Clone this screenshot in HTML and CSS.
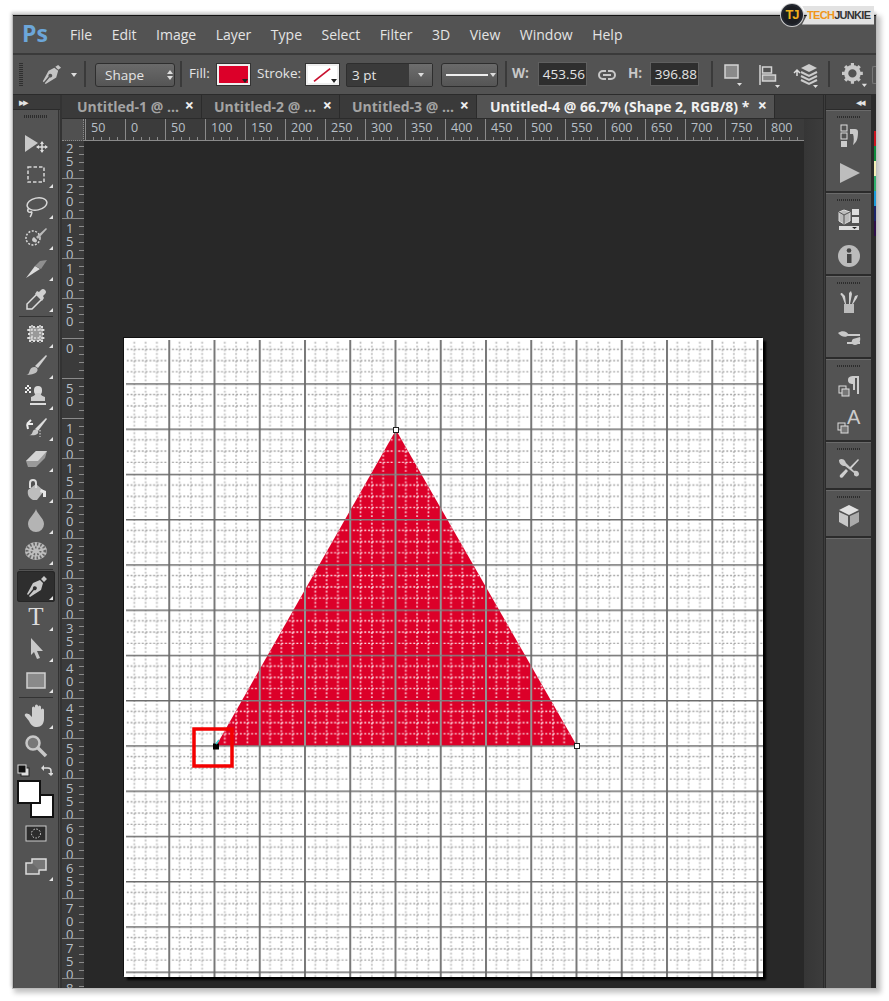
FILE: index.html
```html
<!DOCTYPE html>
<html lang="en">
<head>
    <meta charset="UTF-8">
    <title>Photoshop - Untitled-4</title>
    <link rel="stylesheet" href="styles.css">
</head>
<body>
    <div class="window">
        <div class="watermark">
            <span class="wm-circle">TJ</span>
            <span class="wm-tag"><b class="wm-orange">TECH</b><b>JUNKIE</b></span>
        </div>

        <div class="menu-bar">
            <span class="ps-logo">Ps</span>
            <span>File</span><span>Edit</span><span>Image</span><span>Layer</span><span>Type</span><span>Select</span><span>Filter</span><span>3D</span><span>View</span><span>Window</span><span>Help</span>
        </div>

        <div class="options-bar">
            <div class="opt-grip"></div>
            <svg class="opt-pen" viewBox="0 0 24 24"><path d="M20 2l3 3-3 2-3-3zM16 5l4 3-2 7-11 7-1-1 5-6a2 2 0 1 0-1-1l-5 6-1-1 6-11z" fill="#c4c4c4"/></svg>
            <span class="tri tri-pen"></span>
            <div class="opt-sep sep-a"></div>
            <div class="select shape-select"><span>Shape</span><i class="updown"></i></div>
            <div class="opt-sep sep-b"></div>
            <span class="opt-label fill-label">Fill:</span>
            <div class="swatch fill-swatch"><span class="tri tri-dark"></span></div>
            <span class="opt-label stroke-label">Stroke:</span>
            <div class="swatch stroke-swatch">
                <svg viewBox="0 0 32 20"><path d="M6 18L25 3" stroke="#c8102e" stroke-width="2"/></svg>
                <span class="tri tri-dark"></span>
            </div>
            <div class="combo"><span class="combo-text">3 pt</span><span class="combo-btn"><span class="tri"></span></span></div>
            <div class="select line-select"><i class="line-sample"></i><span class="tri"></span></div>
            <div class="opt-sep sep-c"></div>
            <span class="opt-label w-label">W:</span>
            <div class="field w-field">453.56</div>
            <svg class="link-ico" viewBox="0 0 18 12"><path d="M8 2H5a4 4 0 0 0 0 8h3M10 2h3a4 4 0 0 1 0 8h-3M5 6h8" fill="none" stroke="#c8c8c8" stroke-width="2"/></svg>
            <span class="opt-label h-label">H:</span>
            <div class="field h-field">396.88</div>
            <div class="opt-sep sep-d"></div>
            <svg class="opt-ico path-ops" viewBox="0 0 20 24"><rect x="2" y="3" width="13" height="13" fill="#8a8a8a" stroke="#d4d4d4" stroke-width="1.5"/><path d="M14 21h5l-2.500 3z" fill="#ddd"/></svg>
            <svg class="opt-ico path-align" viewBox="0 0 24 24"><path d="M2 1v20" stroke="#d4d4d4" stroke-width="1.500"/><rect x="4.500" y="3" width="9" height="6" fill="none" stroke="#d4d4d4" stroke-width="1.500"/><rect x="4.500" y="11" width="13" height="6" fill="#888" stroke="#d4d4d4" stroke-width="1.500"/><path d="M17 21h5l-2.500 3z" fill="#ddd"/></svg>
            <svg class="opt-ico path-stack" viewBox="0 0 26 26"><path d="M1 10l3-3 3 3M4 8v5" stroke="#ddd" fill="none" stroke-width="1.500"/><path d="M16 1l8 4-8 4-8-4z" fill="#ccc"/><path d="M8 9l8 4 8-4M8 13l8 4 8-4M8 17l8 4 8-4" fill="none" stroke="#ccc" stroke-width="2"/><path d="M20 22h5l-2.500 3z" fill="#ddd"/></svg>
            <div class="opt-sep sep-e"></div>
            <svg class="opt-ico gear" viewBox="0 0 24 24"><circle cx="10" cy="10" r="6" fill="none" stroke="#c8c8c8" stroke-width="4"/><path d="M10 0v20M0 10h20M3 3l14 14M17 3L3 17" stroke="#c8c8c8" stroke-width="3" stroke-dasharray="3 14"/><path d="M19 20h5l-2.500 3z" fill="#ddd"/></svg>
            <div class="opt-end"></div>
        </div>

        <div class="main">
            <div class="tool-col">
                <div class="col-head"><span>▸▸</span></div>
                <div class="tool-panel">
                    <div class="grip"></div>
                    <div class="tool"><svg viewBox="0 0 24 24"><path d="M1 3l13 8-13 9z" fill="#c9c9c9"/><path d="M18 10v10M13 15h10" stroke="#ddd" stroke-width="1.500"/><path d="M16 12l2-3 2 3zM16 18l2 3 2-3zM15 13l-3 2 3 2zM21 13l3 2-3 2z" fill="#ddd"/></svg></div>
                    <div class="tool more"><svg viewBox="0 0 24 24"><rect x="4" y="4" width="16" height="15" fill="none" stroke="#d8d8d8" stroke-width="1.500" stroke-dasharray="3.500 2"/></svg></div>
                    <div class="tool more"><svg viewBox="0 0 24 24"><ellipse cx="13" cy="10" rx="10" ry="6" transform="rotate(-12 13 10)" fill="none" stroke="#d8d8d8" stroke-width="1.500"/><path d="M5 14c-3 3 0 5 2 4s0 4-1 5" fill="none" stroke="#d8d8d8" stroke-width="1.500"/></svg></div>
                    <div class="tool more"><svg viewBox="0 0 24 24"><circle cx="9" cy="13" r="7" fill="none" stroke="#d8d8d8" stroke-width="1.500" stroke-dasharray="2 1.500"/><path d="M10 17c-3-1-2-4 0-5l3 3c0 2-1 3-3 2z" fill="#ccc"/><path d="M12 12L22 3l1 1-9 10z" fill="#bbb"/></svg></div>
                    <div class="tool more"><svg viewBox="0 0 24 24"><path d="M2 22l9-12 5 3z" fill="#ddd"/><path d="M11 10l5-5 7-1-6 9z" fill="#8f8f8f"/></svg></div>
                    <div class="tool more"><svg viewBox="0 0 24 24"><path d="M13 7l5 5L8 22H3v-5z" fill="#555" stroke="#ddd" stroke-width="1.500"/><path d="M11 7l7 7 2-3-1-2 2-2a2.800 2.800 0 0 0-4-4l-2 2-2-1z" fill="#d0d0d0"/></svg></div>
                    <div class="tool-sep"></div>
                    <div class="tool more"><svg viewBox="0 0 24 24"><rect x="5" y="5" width="14" height="14" fill="#999"/><path d="M3 8h18M3 16h18M8 3v18M16 3v18" stroke="#ddd" stroke-width="1.500" stroke-dasharray="2 1.500"/><path d="M5 5h14v14H5z" fill="none" stroke="#ddd" stroke-width="2" stroke-dasharray="2 2"/></svg></div>
                    <div class="tool more"><svg viewBox="0 0 24 24"><path d="M11 13L22 2l1 1-9 12z" fill="#d0d0d0"/><path d="M2 22c3 0 3-3 4-5 1-3 5-4 7-2 2 3-1 7-11 7z" fill="#c0c0c0"/></svg></div>
                    <div class="tool more"><svg viewBox="0 0 24 24"><rect x="10" y="2" width="8" height="9" rx="4" fill="#d8d8d8"/><path d="M7 13c3-1 4-2 5-4h4c1 2 2 3 5 4v4H7z" fill="#ccc"/><path d="M6 20h16" stroke="#ddd" stroke-width="2"/><path d="M1 3h2v2H1zM5 3h2v2H5zM3 5h2v2H3zM1 7h2v2H1zM5 7h2v2H5zM3 1h2v2H3z" fill="#eee"/></svg></div>
                    <div class="tool more"><svg viewBox="0 0 24 24"><path d="M3 9l4-4M3 9h6M3 9l1 5" fill="none" stroke="#eee" stroke-width="2"/><path d="M11 14L22 3l1 1-9 12z" fill="#ddd"/><path d="M5 20c3 0 3-2 4-4 1-2 4-2 5 0 1 3-2 5-9 4z" fill="#c8c8c8"/><path d="M16 15v7" stroke="#ddd" stroke-dasharray="1.500 1.500"/></svg></div>
                    <div class="tool more"><svg viewBox="0 0 24 24"><path d="M2 15L12 5h11l-2 7-9 9H4z" fill="#9a9a9a"/><path d="M2 15L12 5h11l-9 10z" fill="#d4d4d4"/></svg></div>
                    <div class="tool more"><svg viewBox="0 0 24 24"><path d="M4 13l8-6 8 7-7 9H9c-4-2-6-5-5-10z" fill="#bdbdbd"/><path d="M6 11V6a3 3 0 0 1 6 0v5" fill="none" stroke="#ddd" stroke-width="2"/><path d="M17 12l5 2v6h-3v-4l-3-1z" fill="#e8e8e8"/></svg></div>
                    <div class="tool more"><svg viewBox="0 0 24 24"><path d="M12 1c1 5 8 9 8 15a8 8 0 0 1-16 0c0-6 7-10 8-15z" fill="#b4b4b4"/></svg></div>
                    <div class="tool more"><svg viewBox="0 0 24 24"><ellipse cx="12" cy="12" rx="11" ry="9" fill="#bdbdbd"/><ellipse cx="12" cy="12" rx="9" ry="7" fill="none" stroke="#666" stroke-width="3" stroke-dasharray="1.500 2"/><ellipse cx="12" cy="12" rx="4.500" ry="3.500" fill="none" stroke="#666" stroke-width="2" stroke-dasharray="1.500 2"/></svg></div>
                    <div class="tool-sep"></div>
                    <div class="tool more active"><svg viewBox="0 0 24 24"><path d="M20 1l3 3-3 3-3-3zM16 5l3 3-2 7-11 7-1-1 5-6a2 2 0 1 0-1-1l-5 6-1-1 6-11z" fill="#c8c8c8"/></svg></div>
                    <div class="tool more type-tool">T</div>
                    <div class="tool more"><svg viewBox="0 0 24 24"><path d="M7 1l12 13h-6l3 7-3 1-3-7-3 3z" fill="#c8c8c8"/></svg></div>
                    <div class="tool more"><svg viewBox="0 0 24 24"><rect x="3" y="5" width="18" height="15" fill="#8a8a8a" stroke="#d0d0d0" stroke-width="1.500"/></svg></div>
                    <div class="tool-sep"></div>
                    <div class="tool more"><svg viewBox="0 0 24 24"><path d="M5 11l3 3V5a1.500 1.500 0 0 1 3 0v6-8a1.500 1.500 0 0 1 3 0v8-7a1.500 1.500 0 0 1 3 0v8-5a1.500 1.500 0 0 1 3 0v9c0 5-3 8-7 8s-6-2-8-6l-4-5c-1-2 1-3 3-2z" fill="#cfcfcf"/></svg></div>
                    <div class="tool"><svg viewBox="0 0 24 24"><circle cx="9" cy="9" r="6.500" fill="#777" stroke="#c8c8c8" stroke-width="2.500"/><path d="M14 14l8 8" stroke="#c8c8c8" stroke-width="3.500"/></svg></div>
                    <div class="color-mini">
                        <svg class="mini-swatch" viewBox="0 0 13 13"><rect x="4" y="4" width="8" height="8" fill="#ddd" stroke="#222"/><rect x="1" y="1" width="8" height="8" fill="#111" stroke="#ddd"/></svg>
                        <svg class="mini-swap" viewBox="0 0 13 13"><path d="M2 4h6a3 3 0 0 1 3 3v3" fill="none" stroke="#ddd" stroke-width="1.500"/><path d="M4 1L1 4l3 3zM8 9l3 3 3-3z" fill="#ddd"/></svg>
                    </div>
                    <div class="color-box"><div class="color-bg"></div><div class="color-fg"></div></div>
                    <div class="tool mask-tool"><svg viewBox="0 0 24 24"><rect x="2" y="4" width="20" height="15" fill="#2c2c2c" stroke="#ccc"/><circle cx="12" cy="11.500" r="4.500" fill="none" stroke="#ddd" stroke-dasharray="1.500 1.500"/></svg></div>
                    <div class="tool more"><svg viewBox="0 0 24 24"><rect x="8" y="4" width="14" height="11" fill="#777" stroke="#ddd" stroke-width="1.500"/><path d="M8 8H2v11h13v-4" fill="#6a6a6a" stroke="#ddd" stroke-width="1.500"/></svg></div>
                </div>
            </div>

            <div class="center">
                <div class="tabs">
                    <div class="tab tab-a"><span>Untitled-1 @ ...</span><i>×</i></div>
                    <div class="tab tab-b"><span>Untitled-2 @ ...</span><i>×</i></div>
                    <div class="tab tab-c"><span>Untitled-3 @ ...</span><i>×</i></div>
                    <div class="tab tab-active"><span>Untitled-4 @ 66.7% (Shape 2, RGB/8) *</span><i>×</i></div>
                </div>
                <div class="view">
                    <div class="ruler-corner"></div>
                    <div class="h-ruler">
                        <span>50</span><span>0</span><span>50</span><span>100</span><span>150</span><span>200</span><span>250</span><span>300</span><span>350</span><span>400</span><span>450</span><span>500</span><span>550</span><span>600</span><span>650</span><span>700</span><span>750</span><span>800</span>
                    </div>
                    <div class="gutter"></div>
                    <div class="v-ruler">
                        <div>2<br>5<br>0</div>
                        <div>2<br>0<br>0</div>
                        <div>1<br>5<br>0</div>
                        <div>1<br>0<br>0</div>
                        <div>5<br>0</div>
                        <div>0</div>
                        <div>5<br>0</div>
                        <div>1<br>0<br>0</div>
                        <div>1<br>5<br>0</div>
                        <div>2<br>0<br>0</div>
                        <div>2<br>5<br>0</div>
                        <div>3<br>0<br>0</div>
                        <div>3<br>5<br>0</div>
                        <div>4<br>0<br>0</div>
                        <div>4<br>5<br>0</div>
                        <div>5<br>0<br>0</div>
                        <div>5<br>5<br>0</div>
                        <div>6<br>0<br>0</div>
                        <div>6<br>5<br>0</div>
                        <div>7<br>0<br>0</div>
                        <div>7<br>5<br>0</div>
                        <div>8<br>0<br>0</div>
                    </div>
                    <div class="canvas">
                        <svg class="document" viewBox="0 0 639 639">
                            <defs>
                                <pattern id="grid" patternUnits="userSpaceOnUse" x="-1" y="0" width="45.25" height="45.25">
                                    <path d="M11.300 0v45.250M22.600 0v45.250M33.900 0v45.250" stroke="#bebebe" stroke-width="1.700" stroke-dasharray="1.900 1.870" fill="none"/>
                                    <path d="M0 11.300h45.250M0 22.600h45.250M0 33.900h45.250" stroke="#a2a2a2" stroke-width="1.300" stroke-dasharray="1.900 1.870" fill="none"/>
                                    <path d="M0 0v45.250" stroke="#787878" stroke-width="4" fill="none"/>
                                    <path d="M0 0h45.250" stroke="#6c6c6c" stroke-width="3" fill="none"/>
                                </pattern>
                                <pattern id="grid-red" patternUnits="userSpaceOnUse" x="-1" y="0" width="45.25" height="45.25">
                                    <path d="M11.300 0v45.250M22.600 0v45.250M33.900 0v45.250" stroke="#f9c0cc" stroke-width="1.700" stroke-dasharray="1.900 1.870" fill="none"/>
                                    <path d="M0 11.300h45.250M0 22.600h45.250M0 33.900h45.250" stroke="#fde6ea" stroke-width="1.300" stroke-dasharray="1.900 1.870" fill="none"/>
                                    <path d="M0 0v45.250" stroke="#939393" stroke-width="4" fill="none"/>
                                    <path d="M0 0h45.250" stroke="#808080" stroke-width="3" fill="none"/>
                                </pattern>
                            </defs>
                            <rect width="639" height="639" fill="#fff"/>
                            <rect width="639" height="639" fill="url(#grid)"/>
                            <path d="M272 92L453 408H92z" fill="#dc0029"/>
                            <path d="M272 92L453 408H92z" fill="url(#grid-red)"/>
                            <path d="M0 1h639M1 0v639" stroke="#fff" stroke-width="2"/>
                            <rect x="269.500" y="89.500" width="5" height="5" fill="#fff" stroke="#222"/>
                            <rect x="450.500" y="405.500" width="5" height="5" fill="#fff" stroke="#222"/>
                            <rect x="89.500" y="406" width="5" height="5" fill="#000" stroke="#000"/>
                            <path d="M92 406l3-4" stroke="#3cc" stroke-width="1.500"/>
                            <rect x="70" y="391" width="38" height="37" fill="none" stroke="#f40000" stroke-width="3.500"/>
                        </svg>
                    </div>
                </div>
            </div>

            <div class="dock-col">
                <div class="dock-divider"></div>
                <div class="dock">
                    <div class="col-head dock-head"><span>◂◂</span></div>
                    <div class="dock-group">
                        <div class="grip"></div>
                        <div class="dock-item"><svg viewBox="0 0 24 24"><rect x="4" y="1" width="6" height="6" fill="none" stroke="#ddd"/><rect x="4" y="9" width="6" height="6" fill="none" stroke="#ddd"/><rect x="4" y="17" width="6" height="6" fill="#ccc"/><path d="M13 5h5a3 3 0 0 1 3 3c0 6-1 10-5 13 1-4 1-8 0-11h-3z" fill="#c8c8c8"/></svg></div>
                        <div class="dock-item"><svg viewBox="0 0 24 24"><path d="M3 2l20 10L3 22z" fill="#bdbdbd"/></svg></div>
                    </div>
                    <div class="dock-group">
                        <div class="grip"></div>
                        <div class="dock-item"><svg viewBox="0 0 24 24"><path d="M7 3l6 2v9l-6 3-5-3V5z" fill="#bbb" stroke="#ddd"/><path d="M2 5l5 3 6-3M7 8v9" stroke="#555" fill="none"/><rect x="15" y="2" width="7" height="6" fill="#ddd"/><rect x="15" y="10" width="7" height="6" fill="#ddd"/><rect x="2" y="19" width="20" height="4" fill="#ddd"/><path d="M15 20h5l-2.500 2z" fill="#222"/></svg></div>
                        <div class="dock-item"><svg viewBox="0 0 24 24"><circle cx="12" cy="12" r="11" fill="#bbb"/><rect x="10" y="10" width="4.500" height="9" fill="#444"/><circle cx="12" cy="6.500" r="2.300" fill="#444"/></svg></div>
                    </div>
                    <div class="dock-group">
                        <div class="grip"></div>
                        <div class="dock-item"><svg viewBox="0 0 24 24"><rect x="7" y="14" width="10" height="9" fill="#bbb"/><path d="M8 14L5 6c-2-1-2-3 0-3l3 3 1 8zM12 14V3l2-2 1 3-2 10zM15 14l3-8 3-1-1 3-4 6z" fill="#d0d0d0"/></svg></div>
                        <div class="dock-item"><svg viewBox="0 0 24 24"><path d="M10 7h13v2H10zM10 17h13v-2H10z" fill="#ccc"/><path d="M1 6c4-3 9-2 11 2-3 3-8 2-11-2zM23 10c1 4-1 8-5 8s-4-4-2-6z" fill="#c8c8c8"/></svg></div>
                    </div>
                    <div class="dock-group">
                        <div class="grip"></div>
                        <div class="dock-item"><svg viewBox="0 0 24 24"><path d="M17 3h5v18h-2V5h-2v12h-2V11c-3 0-5-1-5-4s2-4 6-4z" fill="#ccc"/><rect x="2" y="13" width="7" height="7" fill="none" stroke="#ddd"/><rect x="5" y="16" width="7" height="7" fill="#777" stroke="#ddd"/></svg></div>
                        <div class="dock-item"><svg viewBox="0 0 24 24"><text class="dock-a" x="10" y="14">A</text><rect x="1" y="13" width="7" height="7" fill="none" stroke="#ddd"/><rect x="4" y="16" width="7" height="7" fill="#777" stroke="#ddd"/></svg></div>
                    </div>
                    <div class="dock-group dock-short">
                        <div class="grip"></div>
                        <div class="dock-item"><svg viewBox="0 0 24 24"><path d="M2 4c2-2 5-1 6 1l1 2 8 8c2-1 5 0 5 3s-4 3-5 1v-2L8 10C5 10 2 8 2 4z" fill="#c8c8c8"/><path d="M21 3l1 1-8 9-2-1zM9 13l2 2-5 6c-2 2-4 0-3-2z" fill="#d0d0d0"/></svg></div>
                    </div>
                    <div class="dock-group dock-short">
                        <div class="grip"></div>
                        <div class="dock-item"><svg viewBox="0 0 24 24"><path d="M12 1l10 5-10 5L2 6z" fill="#e0e0e0"/><path d="M2 8l9 4v11l-9-5z" fill="#c8c8c8"/><path d="M22 8l-9 4v11l9-5z" fill="#aaa"/></svg></div>
                    </div>
                    <div class="dock-group dock-rest"></div>
                </div>
                <div class="dock-edge"><i class="e-red"></i><i class="e-green"></i><i class="e-cream"></i><i class="e-mint"></i><i class="e-blue"></i><i class="e-navy"></i><i class="e-purple"></i></div>
            </div>
        </div>
    </div>
</body>
</html>
```

FILE: styles.css
```css
:root {
    --panel: #535353;
    --panel-dark: #3a3a3a;
    --line: #2b2b2b;
    --canvas: #282828;
    --text: #e4e4e4;
    --ruler-text: #b9c0c8;
}

html, body {
    margin: 0;
    padding: 0;
    background: #fff;
}

body {
    height: 1001px;
    overflow: hidden;
    font-family: 'Open Sans', sans-serif;
}

.window {
    position: relative;
    width: 863px;
    height: 973px;
    margin: 15px 0 0 13px;
    background: var(--panel);
    border-top: 1px solid #111;
    box-sizing: border-box;
    box-shadow: 0 0 0 1px #bcbcbc, 3px 3px 5px 2px #c4c4c4, -1px -2px 3px 1px #d4d4d4;
    display: flex;
    flex-direction: column;
}

.watermark {
    position: absolute;
    top: -12px;
    right: 2px;
    display: flex;
    align-items: center;
    z-index: 5;
}

.wm-circle {
    width: 18px;
    height: 18px;
    border-radius: 50%;
    border: 2px solid #22262e;
    background: #1b1d22;
    box-shadow: 0 0 0 1px #ccc;
    color: #f2b11b;
    font: bold 13px 'Liberation Sans', sans-serif;
    letter-spacing: -1px;
    text-align: center;
    line-height: 18px;
    z-index: 1;
}

.wm-tag {
    width: 72px;
    height: 19px;
    margin-left: -1px;
    background: #e2e2e2;
    clip-path: polygon(0 0, 100% 0, 100% 100%, 0 100%, 5px 50%);
    color: #333;
    font: bold 11px 'Liberation Sans', sans-serif;
    letter-spacing: -0.700px;
    line-height: 19px;
    padding-left: 5px;
    box-sizing: border-box;
    white-space: nowrap;
}

.wm-tag b {
    font-weight: bold;
}

.wm-orange {
    color: #f0961a;
}

/* menu */
.menu-bar {
    height: 37px;
    border-bottom: 2px solid #3a3a3a;
    display: flex;
    align-items: center;
    gap: 19.500px;
    padding-left: 57px;
    color: var(--text);
    font-size: 14px;
    position: relative;
    flex: none;
}

.ps-logo {
    position: absolute;
    left: 9px;
    top: 1px;
    color: #6ca6d9;
    font-size: 23px;
    font-weight: 700;
}

/* options bar: the controls sit at fixed places along the bar */
.options-bar {
    position: relative;
    height: 39px;
    flex: none;
    border-bottom: 1px solid var(--line);
    color: var(--text);
    font-size: 13.500px;
}

.options-bar > * {
    position: absolute;
    box-sizing: border-box;
}

.opt-grip {
    left: 6px;
    top: 8px;
    width: 4px;
    height: 23px;
    background: repeating-linear-gradient(#2f2f2f 0 1px, transparent 1px 2px);
}

.opt-pen {
    left: 26px;
    top: 8px;
    width: 23px;
    height: 23px;
}

.opt-sep {
    top: 6px;
    width: 2px;
    height: 26px;
    background: #3a3a3a;
}

.sep-a { left: 71px; }
.sep-b { left: 167px; }
.sep-c { left: 492px; }
.sep-d { left: 698px; }
.sep-e { left: 815px; }

.tri {
    display: inline-block;
    width: 0;
    height: 0;
    border: 3.500px solid transparent;
    border-top: 4px solid #ddd;
    border-bottom: 0;
}

.tri-pen {
    left: 58px;
    top: 18px;
}

.select {
    top: 8px;
    height: 24px;
    border: 1px solid #2e2e2e;
    border-radius: 3px;
    background: linear-gradient(#6a6a6a, #555);
    display: flex;
    align-items: center;
}

.shape-select {
    left: 82px;
    width: 80px;
    padding-left: 9px;
}

.updown {
    position: absolute;
    right: 4px;
    top: 5px;
    width: 0;
    height: 12px;
}

.updown::before,
.updown::after {
    content: "";
    position: absolute;
    left: -3.500px;
    border-left: 3.500px solid transparent;
    border-right: 3.500px solid transparent;
}

.updown::before {
    top: 1px;
    border-bottom: 4px solid #ddd;
}

.updown::after {
    bottom: 1px;
    border-top: 4px solid #ddd;
}

.opt-label {
    top: 9px;
    font-weight: 400;
}

.fill-label { left: 176px; }
.stroke-label { left: 244px; }
.w-label { left: 499px; font-weight: 700; color: #c8c8c8; }
.h-label { left: 615px; font-weight: 700; color: #c8c8c8; }

.swatch {
    top: 9px;
    height: 21px;
    border: 2px solid #eee;
    outline: 1px solid #333;
}

.swatch .tri {
    position: absolute;
    right: 0;
    bottom: 0;
}

.tri-dark {
    border-top-color: #222;
}

.fill-swatch {
    left: 204px;
    width: 33px;
    background: #dc0029;
}

.stroke-swatch {
    left: 293px;
    width: 33px;
    background: #fff;
}

.stroke-swatch svg {
    display: block;
    width: 29px;
    height: 17px;
}

.combo {
    left: 333px;
    top: 8px;
    width: 87px;
    height: 24px;
    border: 1px solid #2e2e2e;
    border-radius: 2px;
    background: #3a3a3a;
    display: flex;
}

.combo-text {
    flex: 1;
    padding-left: 5px;
    line-height: 23px;
}

.combo-btn {
    width: 23px;
    background: linear-gradient(#6e6e6e, #565656);
    display: flex;
    align-items: center;
    justify-content: center;
}

.line-select {
    left: 428px;
    width: 57px;
    padding-left: 4px;
    gap: 2px;
}

.line-sample {
    width: 42px;
    height: 2px;
    background: #eee;
}

.field {
    top: 7px;
    width: 49px;
    height: 24px;
    border: 1px solid #5f5f5f;
    background: #2e2e2e;
    text-align: right;
    padding-right: 1px;
    line-height: 23px;
    font-size: 13.500px;
}

.w-field { left: 525px; }
.h-field { left: 637px; }

.link-ico {
    left: 585px;
    top: 14px;
    width: 18px;
    height: 12px;
}

.path-ops { left: 710px; top: 7px; width: 20px; height: 24px; }
.path-align { left: 745px; top: 9px; width: 24px; height: 24px; }
.path-stack { left: 780px; top: 8px; width: 26px; height: 26px; }
.gear { left: 829px; top: 8px; width: 25px; height: 25px; }

.opt-end {
    right: 0;
    top: 11px;
    width: 4px;
    height: 18px;
    border: 1px solid #777;
    border-right: 0;
    border-radius: 2px 0 0 2px;
}

/* main area */
.main {
    flex: 1;
    display: flex;
    min-height: 0;
}

.tool-col {
    width: 47px;
    flex: none;
    display: flex;
    flex-direction: column;
    background: #4a4a4a;
}

.col-head {
    height: 14px;
    flex: none;
    background: var(--panel-dark);
    color: #e4e4e4;
    font-size: 11px;
    line-height: 13px;
    padding-left: 6px;
    letter-spacing: -2px;
    border-bottom: 1px solid var(--line);
    overflow: hidden;
}

.tool-panel {
    flex: 1;
    margin-left: 1px;
    background: var(--panel);
    border: 1px solid #333;
    border-width: 0 1px 0 0;
    width: 44px;
    margin-right: 1px;
    box-sizing: content-box;
}

.grip {
    height: 3px;
    width: 24px;
    margin: 5px auto 0;
    background: repeating-linear-gradient(90deg, #2c2c2c 0 1px, transparent 1px 2px);
}

.tool-panel > .grip {
    margin-bottom: 10px;
}

.tool {
    position: relative;
    height: 31px;
    display: flex;
    align-items: center;
    justify-content: center;
    margin: 0 3px;
    border-radius: 3px;
    box-sizing: border-box;
}

.tool svg {
    width: 24px;
    height: 24px;
}

.more::after {
    content: "";
    position: absolute;
    right: 2px;
    bottom: 2px;
    border-left: 4px solid transparent;
    border-bottom: 4px solid #e4e4e4;
}

.tool.active {
    background: #2e2e2e;
    box-shadow: inset 0 0 0 1px #262626;
}

.type-tool {
    color: #ddd;
    font: 25px 'Liberation Serif', serif;
    padding-bottom: 2px;
}

.tool-sep {
    height: 1px;
    margin: 2px 5px 1.500px;
    background: #333;
}

.color-mini {
    display: flex;
    justify-content: space-between;
    padding: 2px 5px 0 3px;
    height: 19px;
    box-sizing: border-box;
}

.mini-swatch,
.mini-swap {
    width: 13px;
    height: 13px;
}

.color-box {
    position: relative;
    height: 38px;
    margin-left: 3px;
}

.color-fg,
.color-bg {
    position: absolute;
    width: 22px;
    height: 22px;
    background: #fff;
    border: 1px solid #111;
    box-sizing: border-box;
}

.color-fg {
    left: 1px;
    top: 0;
    box-shadow: 0 0 0 1px #111;
}

.color-bg {
    left: 14px;
    top: 14px;
    box-shadow: 0 0 0 1px #111;
}

.color-box + .tool + .tool {
    margin-top: 2px;
}

/* tabs and document view */
.center {
    width: 763px;
    flex: none;
    display: flex;
    flex-direction: column;
    border-left: 2px solid #333;
    box-sizing: border-box;
    min-height: 0;
}

.tabs {
    height: 24px;
    flex: none;
    display: flex;
    background: var(--panel-dark);
    border-bottom: 1px solid var(--line);
    box-sizing: border-box;
    color: #a4a4a4;
    font-size: 14px;
    font-weight: 700;
}

.tab {
    position: relative;
    border-right: 1px solid var(--line);
    line-height: 23px;
    white-space: nowrap;
    box-sizing: border-box;
}

.tab i {
    position: absolute;
    right: 7px;
    top: -1px;
    font-style: normal;
    color: #f0f0f0;
    font-size: 16px;
}

.tab-a { width: 140px; padding-left: 15px; }
.tab-b { width: 138px; padding-left: 12px; }
.tab-c { width: 137px; padding-left: 12px; }

.tab-active {
    width: 298px;
    padding-left: 13px;
    background: var(--panel);
    color: #f0f0f0;
}

.view {
    flex: 1;
    display: grid;
    grid-template-columns: 22px 720px 1fr;
    grid-template-rows: 22px 1fr;
    min-height: 0;
    background: var(--canvas);
}

.ruler-corner {
    background: #505050;
    border-right: 1px dotted #8a8a8a;
    border-bottom: 1px dotted #8a8a8a;
    box-sizing: border-box;
}

.h-ruler {
    display: flex;
    overflow: hidden;
    background: #3b3b3b;
    border-bottom: 1px solid #8a8a8a;
    box-sizing: border-box;
    padding-left: 1px;
    color: var(--ruler-text);
    font-size: 12.500px;
}

.h-ruler span {
    flex: 0 0 40px;
    box-sizing: border-box;
    padding-left: 5px;
    line-height: 18px;
    border-left: 1px solid #8a8a8a;
    background: repeating-linear-gradient(90deg, transparent 0 7px, #8a8a8a 7px 8px) bottom / 100% 3px no-repeat;
}

.gutter {
    grid-column: 3;
    grid-row: 1 / 3;
    background: linear-gradient(90deg, #363636, #3c3c3c);
}

.v-ruler {
    overflow: hidden;
    background: #3b3b3b;
    color: var(--ruler-text);
    font-size: 13px;
    line-height: 13.300px;
}

.v-ruler div {
    height: 40px;
    box-sizing: border-box;
    padding: 3px 0 0 4px;
    border-top: 1px solid #8a8a8a;
    background: repeating-linear-gradient(transparent 0 7px, #8a8a8a 7px 8px) right / 5px 100% no-repeat;
    overflow: hidden;
}

.v-ruler div:first-child {
    margin-top: -3.500px;
}

.canvas {
    overflow: hidden;
    padding: 197px 0 0 40px;
    background: var(--canvas);
}

.document {
    display: block;
    width: 639px;
    height: 639px;
    box-shadow: -1px -1px 0 #111, 3px 3px 2px #000;
}

/* right dock */
.dock-col {
    flex: 1;
    display: flex;
    min-width: 0;
}

.dock-divider {
    width: 3px;
    background: linear-gradient(90deg, #222, #3d3d3d, #222);
}

.dock {
    width: 45px;
    display: flex;
    flex-direction: column;
    gap: 2px;
    background: #2b2b2b;
}

.dock-head {
    text-align: right;
    padding-right: 7px;
    margin-bottom: -2px;
}

.dock-group {
    height: 81px;
    flex: none;
    background: var(--panel);
    border-top: 1px solid #6a6a6a;
    box-sizing: border-box;
}

.dock-short {
    height: 46px;
}

.dock-rest {
    flex: 1;
}

.dock-item {
    height: 37px;
    display: flex;
    align-items: center;
    justify-content: center;
}

.dock-group .grip {
    height: 2px;
    margin-top: 5px;
    margin-bottom: -1px;
}

.dock-item svg {
    width: 24px;
    height: 24px;
}

.dock-a {
    fill: #ccc;
    font: 20px 'Liberation Sans', sans-serif;
}

.dock-edge {
    flex: 1;
    display: flex;
    flex-direction: column;
    padding: 36px 0 0 3px;
    background: #2b2b2b;
}

.dock-edge i {
    height: 15px;
    display: block;
}

.e-red { background: #c8141e; }
.e-green { background: #0f8a3c; }
.e-cream { background: #f2efb8; }
.e-mint { background: #2fae6c; }
.e-blue { background: #1a9ad8; }
.e-navy { background: #1c2468; }
.e-purple { background: #2e0f4a; }
```
